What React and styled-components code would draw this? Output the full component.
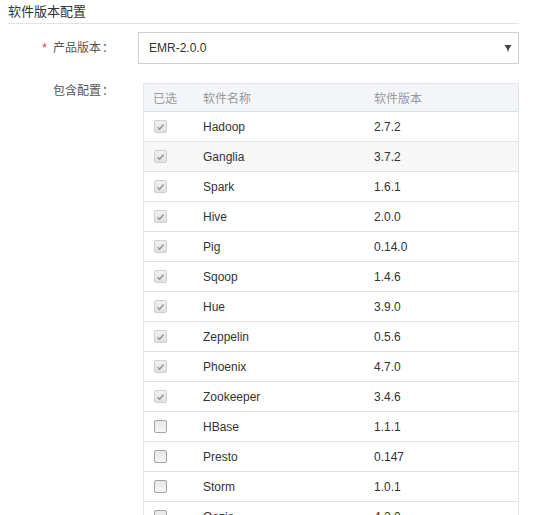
import React from "react";
import styled, { createGlobalStyle } from "styled-components";

const softwareList = [
  { name: "Hadoop", version: "2.7.2", checked: true },
  { name: "Ganglia", version: "3.7.2", checked: true, hover: true },
  { name: "Spark", version: "1.6.1", checked: true },
  { name: "Hive", version: "2.0.0", checked: true },
  { name: "Pig", version: "0.14.0", checked: true },
  { name: "Sqoop", version: "1.4.6", checked: true },
  { name: "Hue", version: "3.9.0", checked: true },
  { name: "Zeppelin", version: "0.5.6", checked: true },
  { name: "Phoenix", version: "4.7.0", checked: true },
  { name: "Zookeeper", version: "3.4.6", checked: true },
  { name: "HBase", version: "1.1.1" },
  { name: "Presto", version: "0.147" },
  { name: "Storm", version: "1.0.1" },
  { name: "Oozie", version: "4.2.0" },
];

const GlobalStyle = createGlobalStyle`
  body {
    margin: 0;
    background: #fff;
    font-family: "Liberation Sans", "Noto Sans CJK SC", sans-serif;
    font-size: 12px;
    color: #333;
  }
`;

const Page = styled.div`
  width: 511px;
  padding: 0 0 0 8px;
`;

const SectionTitle = styled.div`
  font-size: 13px;
  line-height: 23px;
  color: #333;
  border-bottom: 1px solid #e3e3e3;
`;

const FormRow = styled.div`
  display: flex;
  align-items: ${(p) => (p.top ? "flex-start" : "center")};
  margin-top: ${(p) => p.gap}px;
`;

const Label = styled.div`
  width: 130px;
  flex-shrink: 0;
  box-sizing: border-box;
  padding-right: 25px;
  text-align: right;
  color: #555;
  line-height: 17px;
  white-space: nowrap;
`;

const Colon = styled.span`
  display: inline-block;
  width: 12px;
  box-sizing: border-box;
  padding-left: 1px;
  text-align: left;
  text-spacing-trim: space-all;
`;

const Required = styled.span`
  color: #e4393c;
  margin-right: 6px;
`;

const Select = styled.div`
  flex: 1;
  height: 32px;
  box-sizing: border-box;
  border: 1px solid #d0d0d0;
  display: flex;
  align-items: center;
  justify-content: space-between;
  padding: 0 6px 0 10px;
  color: #333;
`;

const Table = styled.div`
  flex: 1;
  margin-left: 5px;
  border: 1px solid #e2e4e8;
  border-bottom: none;
`;

const Row = styled.div`
  display: grid;
  grid-template-columns: 49px 171px 1fr;
  align-items: center;
  height: ${(p) => (p.head ? 27 : 29)}px;
  border-bottom: 1px solid ${(p) => (p.head ? "#dde1e6" : "#e3e3e3")};
  background: ${(p) => (p.head ? "#f3f5f8" : p.hover ? "#f7f7f7" : "#fff")};
  color: ${(p) => (p.head ? "#999" : "#333")};
`;

const Cell = styled.div`
  padding-left: ${(p) => p.pad || 10}px;
  display: flex;
  align-items: center;
`;

const Box = styled.span`
  width: 11px;
  height: 11px;
  border-radius: 2px;
  border: 1px solid ${(p) => (p.checked ? "#cfcfcf" : "#a3a3a3")};
  background: ${(p) =>
    p.checked
      ? "linear-gradient(#f0f0f0, #e2e2e2)"
      : "linear-gradient(#e6e6e6, #f6f6f6)"};
  display: flex;
  align-items: center;
  justify-content: center;
`;

const Checkbox = ({ checked }) => (
  <Box checked={checked}>
    {checked && (
      <svg width="9" height="8" viewBox="0 0 9 8">
        <path d="M1.5 4.2 L3.5 6.2 L7.6 1.4" fill="none" stroke="#9a9a9a" strokeWidth="1.6" />
      </svg>
    )}
  </Box>
);

const Arrow = () => (
  <svg width="8" height="8" viewBox="0 0 8 8">
    <path d="M0.5 1 H7.5 L4 6.5 Z" fill="#444" />
    <rect x="3.5" y="5" width="1" height="2.5" fill="#444" />
  </svg>
);

export default function App() {
  return (
    <Page>
      <GlobalStyle />
      <SectionTitle>软件版本配置</SectionTitle>
      <FormRow gap={8}>
        <Label>
          <Required>*</Required>产品版本<Colon>：</Colon>
        </Label>
        <Select>
          <span>EMR-2.0.0</span>
          <Arrow />
        </Select>
      </FormRow>
      <FormRow gap={19} top>
        <Label>
          包含配置<Colon>：</Colon>
        </Label>
        <Table>
          <Row head>
            <Cell pad={9}>已选</Cell>
            <Cell>软件名称</Cell>
            <Cell>软件版本</Cell>
          </Row>
          {softwareList.map((s) => (
            <Row key={s.name} hover={s.hover}>
              <Cell>
                <Checkbox checked={s.checked} />
              </Cell>
              <Cell>{s.name}</Cell>
              <Cell>{s.version}</Cell>
            </Row>
          ))}
        </Table>
      </FormRow>
    </Page>
  );
}
